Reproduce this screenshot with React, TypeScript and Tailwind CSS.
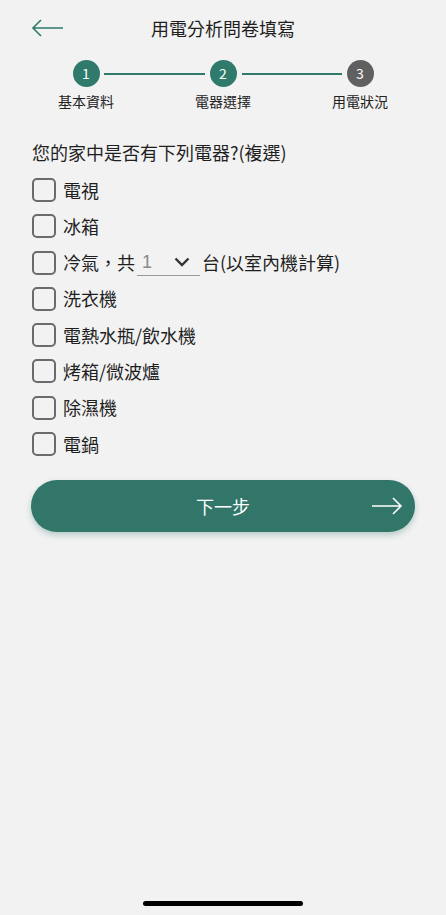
import { useState } from "react";

const FONT = { fontFamily: '"Noto Sans CJK TC", "Noto Sans", sans-serif' };

const ITEMS = ["電視", "冰箱", "冷氣", "洗衣機", "電熱水瓶/飲水機", "烤箱/微波爐", "除濕機", "電鍋"];

function Step({ n, label, active }: { n: number; label: string; active: boolean }) {
  return (
    <div className="flex w-[80px] flex-col items-center">
      <div
        className={`flex h-[27px] w-[27px] items-center justify-center rounded-full text-[14px] text-white ${active ? "bg-[#2f7a6b]" : "bg-[#606060]"}`}
      >
        {n}
      </div>
      <span className="mt-[6px] text-[14px] leading-[16px] text-[#222]">{label}</span>
    </div>
  );
}

function Box({ checked, onClick }: { checked: boolean; onClick: () => void }) {
  return (
    <button
      type="button"
      onClick={onClick}
      className={`h-[24px] w-[24px] shrink-0 rounded-[5px] border-2 ${checked ? "border-[#2f7a6b] bg-[#2f7a6b]" : "border-[#6b6b6b]"}`}
    />
  );
}

export default function App() {
  const [checked, setChecked] = useState<Record<string, boolean>>({});
  const toggle = (k: string) => setChecked((c) => ({ ...c, [k]: !c[k] }));

  return (
    <div className="relative flex h-[915px] w-[446px] flex-col bg-[#f2f2f2] text-[#1f1f1f]" style={FONT}>
      {/* header */}
      <div className="relative flex h-[56px] items-center justify-center">
        <button type="button" className="absolute left-[31px] top-[19px]">
          <svg width="33" height="18" viewBox="0 0 33 18" fill="none" stroke="#2f7a6b" strokeWidth="1.6">
            <path d="M32 9H2M10 1L2 9l8 8" />
          </svg>
        </button>
        <h1 className="text-[18px] font-normal leading-none">用電分析問卷填寫</h1>
      </div>

      {/* steps */}
      <div className="relative mx-auto mt-[4px] flex w-[354px] justify-between">
        <div className="absolute left-[58px] top-[13px] h-[1.5px] w-[101px] bg-[#2f7a6b]" />
        <div className="absolute left-[196px] top-[13px] h-[1.5px] w-[100px] bg-[#2f7a6b]" />
        <Step n={1} label="基本資料" active />
        <Step n={2} label="電器選擇" active />
        <Step n={3} label="用電狀況" active={false} />
      </div>

      {/* question */}
      <p className="ml-[32px] mt-[31px] text-[18px] leading-[24px]">您的家中是否有下列電器?(複選)</p>

      <ul className="ml-[32px] mt-[14px] flex flex-col gap-[12.3px]">
        {ITEMS.map((it) => (
          <li key={it} className="flex h-[24px] items-center gap-[7px] text-[18px]">
            <Box checked={!!checked[it]} onClick={() => toggle(it)} />
            {it === "冷氣" ? (
              <span className="flex items-center">
                冷氣，共
                <span className="mx-[2px] flex h-[26px] w-[63px] items-center justify-between border-b border-[#9a9a9a] pl-[5px] pr-[10px]">
                  <span className="text-[18px] text-[#8a8a8a]" style={{ fontFamily: '"Liberation Sans", sans-serif' }}>1</span>
                  <svg width="16" height="10" viewBox="0 0 16 10" fill="none" stroke="#333" strokeWidth="2.4">
                    <path d="M1.5 1.5L8 8l6.5-6.5" />
                  </svg>
                </span>
                台(以室內機計算)
              </span>
            ) : (
              <span>{it}</span>
            )}
          </li>
        ))}
      </ul>

      {/* next */}
      <button
        type="button"
        className="relative mx-[31px] mt-[24px] flex h-[52px] items-center justify-center rounded-full bg-[#32766a] text-[18px] text-white shadow-[0_3px_6px_rgba(40,110,100,0.3)]"
      >
        下一步
        <svg className="absolute right-[12px] top-[17px]" width="32" height="18" viewBox="0 0 32 18" fill="none" stroke="#fff" strokeWidth="1.6">
          <path d="M1 9h29M22 1l8 8-8 8" />
        </svg>
      </button>

      {/* home indicator */}
      <div className="absolute bottom-[9px] left-[143px] h-[5px] w-[160px] rounded-full bg-black" />
    </div>
  );
}
